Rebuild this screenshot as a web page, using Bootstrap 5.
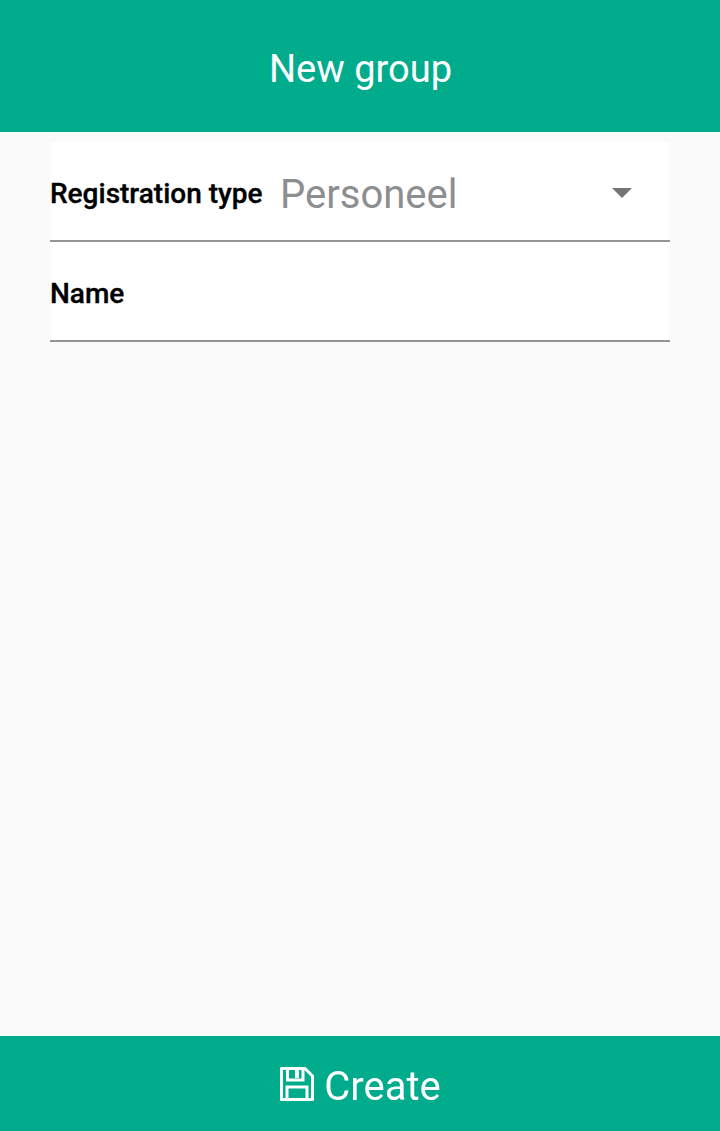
<!DOCTYPE html>
<html><head><meta charset="utf-8">
<link href="https://cdn.jsdelivr.net/npm/bootstrap@5.3.0/dist/css/bootstrap.min.css" rel="stylesheet">
<style>
html,body{height:100%}
body{font-family:Roboto,sans-serif;background:#fafafa}
.shell{height:1131px;will-change:opacity}
.topbar{height:132px;background:#00ac8c;font-size:38px;line-height:1;padding-top:6px;padding-left:1px}
.formrow{height:100px;border-bottom:2px solid #949494;padding-top:5px}
.formwrap{margin:10px 50px 0}
.lbl{font-size:28px;font-weight:500;color:#000;width:231px;flex:none;-webkit-text-stroke:.35px #000}
.val{font-size:40px;color:#8d8e8f;margin-left:-1px;padding-top:2px}
.caret-shape{width:0;height:0;border-left:10px solid transparent;border-right:10px solid transparent;border-top:10px solid #757575;margin-right:38px;margin-top:-1px}
.bottombar{height:95px;background:#00ac8c;font-size:40px;gap:9px;padding-top:6px}
.disk{margin-top:-5px}
</style></head>
<body>
<div class="shell d-flex flex-column">
<header class="topbar d-flex align-items-center justify-content-center text-white">New group</header>
<main class="flex-grow-1">
<div class="formwrap bg-white">
<div class="formrow d-flex align-items-center"><span class="lbl">Registration type</span><span class="val flex-grow-1">Personeel</span><span class="caret-shape"></span></div>
<div class="formrow d-flex align-items-center"><span class="lbl">Name</span></div>
</div>
</main>
<footer class="bottombar d-flex align-items-center justify-content-center text-white">
<svg class="disk" width="36" height="36" viewBox="0 0 36 36" fill="none" stroke="#fff" stroke-width="3"><path d="M2.500 2.500H26L33.500 10V33.500H2.500z" stroke-linejoin="round"/><path d="M8.500 3V14H24V3"/><path d="M8 33V21H28V33"/><path fill="#fff" stroke="none" d="M16 3h4v9h-4z"/></svg>
<span>Create</span>
</footer>
</div>
<script src="https://cdn.jsdelivr.net/npm/bootstrap@5.3.0/dist/js/bootstrap.bundle.min.js"></script>
</body></html>
